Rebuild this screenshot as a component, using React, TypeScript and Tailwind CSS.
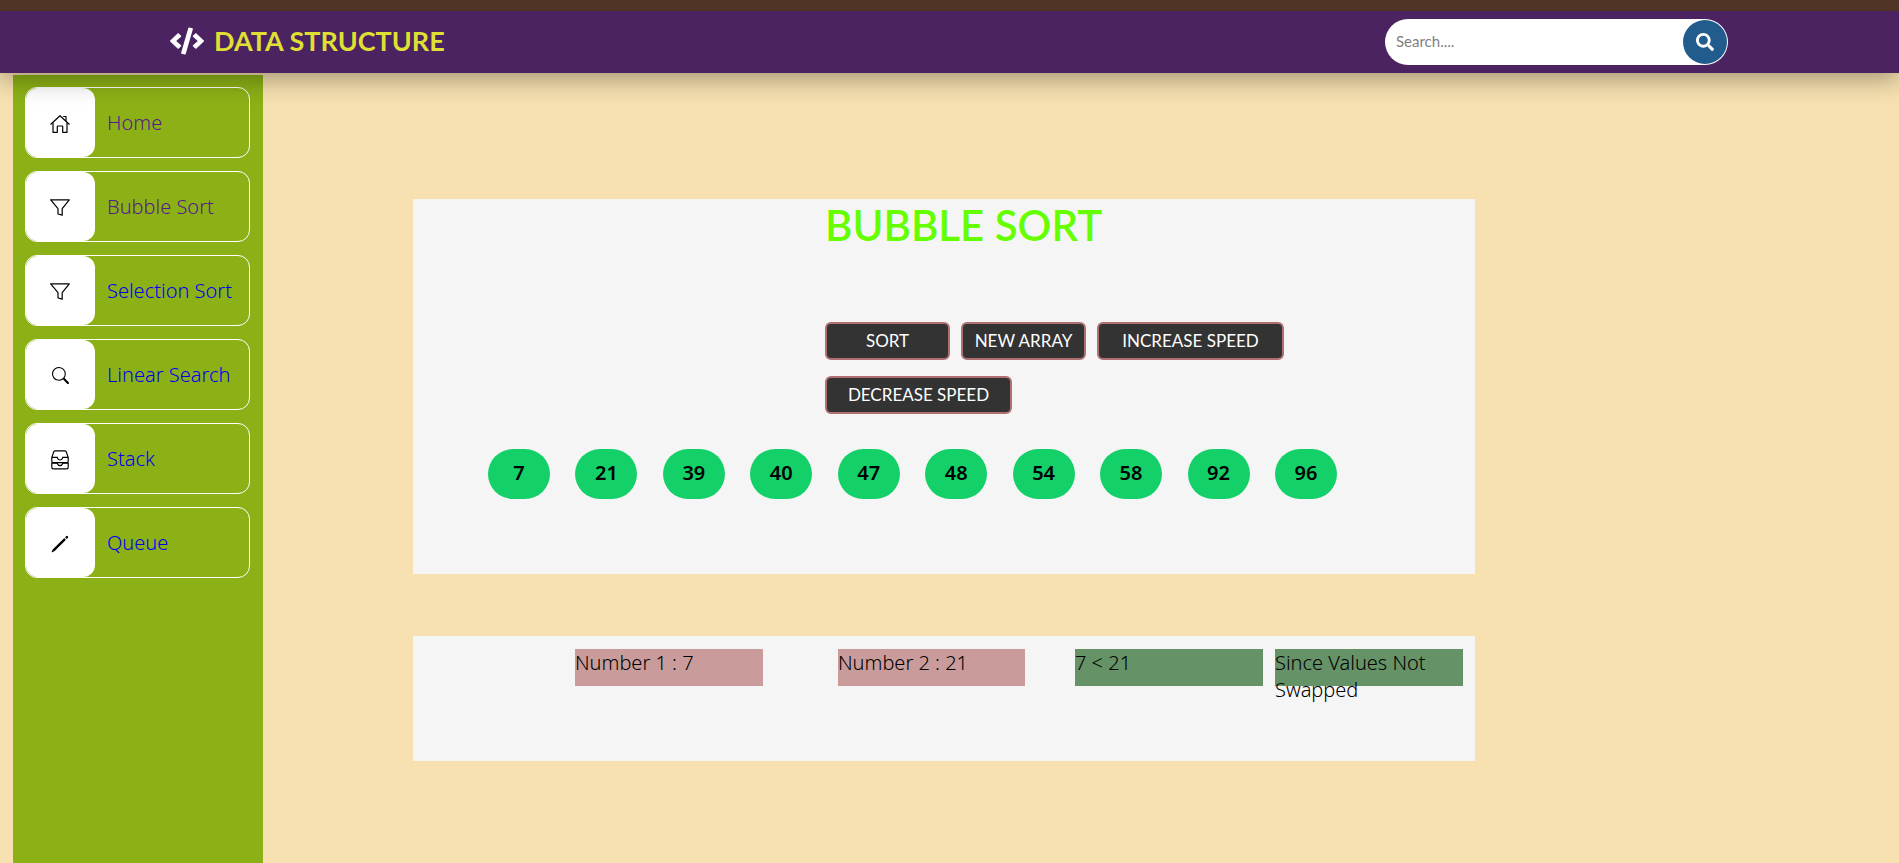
import { useState } from "react";
import type { ReactNode } from "react";
import { BsSearch } from "react-icons/bs";
import { FaCode, FaSearch } from "react-icons/fa";

function HomeIcon() {
  return (
    <svg viewBox="0 0 20 18" className="h-[18px] w-5" fill="none" stroke="currentColor" strokeWidth="1.2" strokeLinejoin="round" strokeLinecap="round" aria-hidden="true">
      <path d="M.8 9.200 10 .8l9.200 8.400" />
      <path d="M3 8v9.300h4.300V11.600q0-.6.6-.6h4.200q.6 0 .6.6v5.700H17V8" />
      <path d="M13.600 1.500h2.400v4" />
    </svg>
  );
}

function FunnelIcon() {
  return (
    <svg viewBox="0 0 20 17" className="h-[17px] w-5" fill="none" stroke="currentColor" strokeWidth="1.200" strokeLinejoin="round" aria-hidden="true">
      <path d="M.7.8h18.600L12.200 9.600v6.600L8 15V9.600Z" />
    </svg>
  );
}

function InboxesIcon() {
  return (
    <svg viewBox="0 0 18 20" className="h-5 w-[18px]" fill="none" stroke="currentColor" strokeWidth="1.2" aria-hidden="true">
      <path d="M.8 7.6 2.6 2.1Q2.9.9 4.1.9h9.8q1.2 0 1.5 1.2l1.8 5.5v3.6q0 1.5-1.5 1.5H2.3Q.8 12.7.8 11.2Z" />
      <path d="M.8 7.4h5.4Q7 10 9 10t2.8-2.6h5.4M.8 13.2h5.4Q7 15.6 9 15.6t2.8-2.4h5.4v4q0 1.7-1.7 1.7h-13Q.8 18.9.8 17.2Z" />
    </svg>
  );
}

function PenIcon() {
  return (
    <svg viewBox="0 0 18 18" className="h-[18px] w-[18px]" fill="none" stroke="currentColor" strokeLinecap="round" aria-hidden="true">
      <path strokeWidth="2.4" d="M2.800 15.200 13.400 4.600" />
      <path strokeWidth="1.400" d="M1.400 16.600 4 14" />
      <path strokeWidth="2.600" d="m15.700 2.300.2-.2" />
    </svg>
  );
}

const links: { label: string; icon: ReactNode; visited?: boolean }[] = [
  { label: "Home", icon: <HomeIcon />, visited: true },
  { label: "Bubble Sort", icon: <FunnelIcon />, visited: true },
  { label: "Selection Sort", icon: <FunnelIcon /> },
  { label: "Linear Search", icon: <BsSearch size={17} /> },
  { label: "Stack", icon: <InboxesIcon /> },
  { label: "Queue", icon: <PenIcon /> },
];

const values = [7, 21, 39, 40, 47, 48, 54, 58, 92, 96];

function ActionButton({ children, wide = false }: { children: ReactNode; wide?: boolean }) {
  return (
    <button
      type="button"
      className={`${wide ? "w-[187px]" : "w-[125px]"} h-[38px] rounded-md border-2 border-[#b07070] bg-[#333333] font-[Lato,sans-serif] text-[17px] leading-6 font-normal whitespace-nowrap text-white`}
    >
      {children}
    </button>
  );
}

export default function App() {
  const [query, setQuery] = useState("");
  return (
    <div className="flex min-h-screen flex-col bg-[#f7e1b0] font-['Noto_Sans',sans-serif] text-xl leading-[27px] font-light text-black">
      <div className="relative z-20 h-[11px] bg-[#503526]" />
      <header className="relative z-10 flex h-[62px] items-center justify-between bg-[#4a2360] pr-[171px] pl-[170px] shadow-[0_6px_26px_rgba(0,0,0,0.35)]">
        <a href="#home" className="flex items-center gap-2.5 pb-[3px] font-[Lato,sans-serif] text-[27px] font-bold text-[#dfdf34]">
          <FaCode size={34} className="text-white" />
          DATA STRUCTURE
        </a>
        <form role="search" onSubmit={(e) => e.preventDefault()} className="flex h-[46px] w-[343px] items-center rounded-full bg-white p-px">
          <input
            type="search"
            aria-label="Search"
            placeholder="Search...."
            value={query}
            onChange={(e) => setQuery(e.target.value)}
            className="min-w-0 flex-1 bg-transparent pb-0.5 pl-2.5 font-[Lato,sans-serif] text-[15px] font-normal text-black outline-none placeholder:text-[#808080]"
          />
          <button type="submit" aria-label="Submit search" className="flex size-11 items-center justify-center rounded-full bg-[#225c8c] text-white">
            <FaSearch size={18} />
          </button>
        </form>
      </header>
      <div className="flex flex-1 items-stretch pt-0.5 pl-[13px]">
        <nav className="flex w-[250px] shrink-0 flex-col gap-[13px] bg-[#8cb116] px-3 py-3">
          {links.map((link) => (
            <a
              key={link.label}
              href={"#" + link.label.toLowerCase().replace(" ", "-")}
              className={`flex h-[71px] w-[225px] items-center rounded-xl border border-white ${link.visited ? "text-[#551a8b]" : "text-[#0000ee]"}`}
            >
              <span className="flex h-[69px] w-[69px] items-center justify-center rounded-xl bg-white pt-0.5 pr-px text-black">{link.icon}</span>
              <span className="pl-3 whitespace-nowrap">{link.label}</span>
            </a>
          ))}
        </nav>
        <main className="flex min-w-0 flex-1 flex-col gap-[62px] pt-[124px] pr-[424px] pl-[150px]">
          <section className="h-[375px] bg-[#f5f5f5]">
            <h1 className="pt-[3px] pl-[412px] font-[Lato,sans-serif] text-[42px] leading-[46px] font-semibold text-[#66ff00]">BUBBLE SORT</h1>
            <div className="flex flex-wrap gap-x-[11px] gap-y-4 pt-[74px] pr-44 pl-[412px]">
              <ActionButton>SORT</ActionButton>
              <ActionButton>NEW ARRAY</ActionButton>
              <ActionButton wide>INCREASE SPEED</ActionButton>
              <ActionButton wide>DECREASE SPEED</ActionButton>
            </div>
            <ul className="flex justify-between pt-[35px] pr-[138px] pl-[75px]">
              {values.map((value) => (
                <li key={value} className="h-[50px] w-[62px] rounded-full bg-[#14d068] pt-[10px] text-center font-semibold">
                  {value}
                </li>
              ))}
            </ul>
          </section>
          <section className="flex h-[125px] bg-[#f5f5f5] pt-[13px] pl-[162px]">
            <p className="mr-[75px] h-[37px] w-[188px] bg-[#c99c9b]">Number 1 : 7</p>
            <p className="mr-[50px] h-[37px] w-[187px] bg-[#c99c9b]">Number 2 : 21</p>
            <p className="mr-3 h-[37px] w-[188px] bg-[#659367]">7 &lt; 21</p>
            <p className="h-[37px] w-[188px] bg-[#659367]">Since Values Not Swapped</p>
          </section>
        </main>
      </div>
    </div>
  );
}
